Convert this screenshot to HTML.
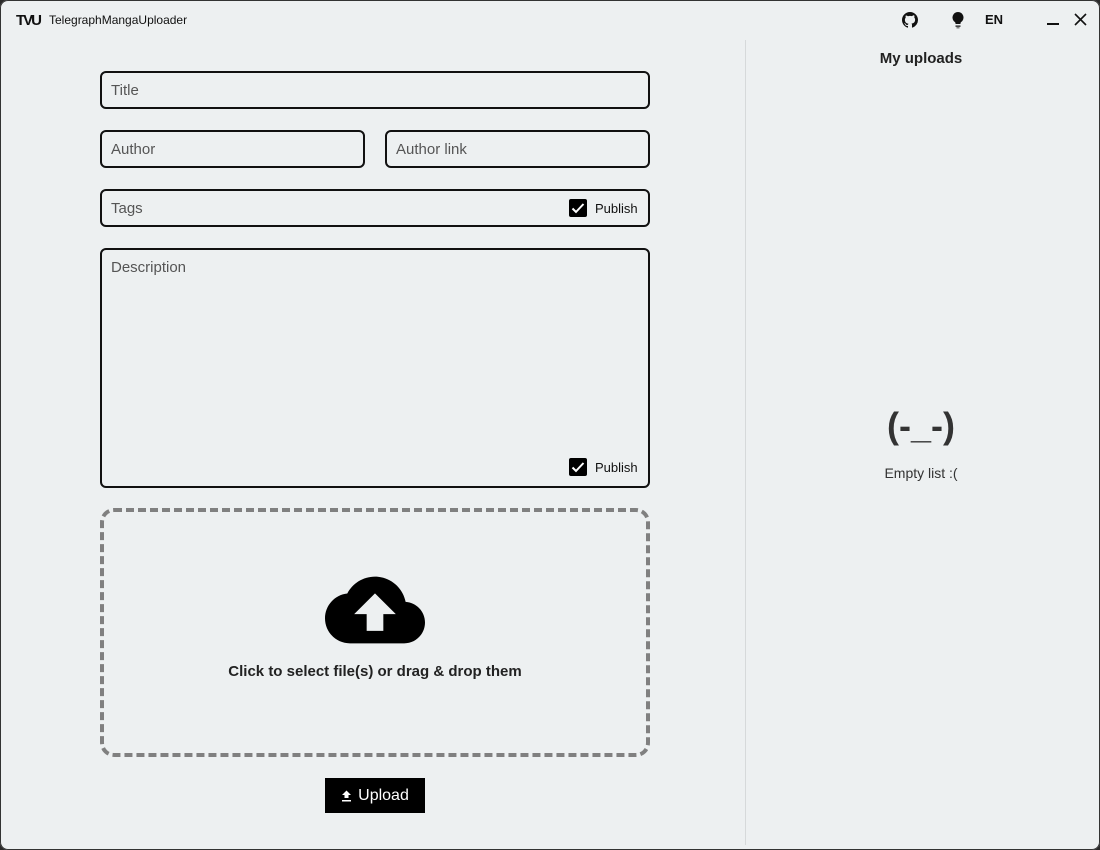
<!DOCTYPE html>
<html><head><meta charset="utf-8"><style>
*{box-sizing:border-box;margin:0;padding:0}
html,body{width:1100px;height:850px;overflow:hidden;background:#2a2a2a}
.win{position:absolute;left:0;top:0;width:1100px;height:850px;background:#edf0f1;box-shadow:inset 0 0 0 1px #333;border-radius:8px;font-family:"Liberation Sans",sans-serif;color:#222}
.t{position:absolute;left:49px;top:13px;font-size:12px;color:#111}
.inp{position:absolute;border:2px solid #111;border-radius:6px;font-size:15px;color:#555;padding:9px 9px}
.pub{position:absolute;font-size:13px;color:#111;display:flex;align-items:center;gap:8px}
.cb{width:18px;height:18px;background:#000;border-radius:2px;position:relative}
.cb svg{position:absolute;left:1px;top:1px}
.drop{position:absolute;left:100px;top:508px;width:550px;height:249px;border:4px dashed #808080;border-radius:14px}
</style></head><body><div class="win">
<div style="position:absolute;left:16px;top:12px;font-weight:bold;font-size:15px;letter-spacing:-2px;color:#111">TVU</div>
<div class="t">TelegraphMangaUploader</div>
<svg style="position:absolute;left:902px;top:12px" width="16" height="16" viewBox="0 0 16 16"><path fill="#111" d="M8 0C3.580 0 0 3.58 0 8c0 3.540 2.290 6.53 5.47 7.59.4.07.55-.17.55-.38v-1.33c-2.23.48-2.7-.95-2.7-.95-.36-.92-.89-1.17-.89-1.170-.73-.5.05-.49.05-.49.8.06 1.23.83 1.23.83.71 1.22 1.87.87 2.33.66.07-.52.28-.87.51-1.07-1.78-.2-3.640-.89-3.64-3.95 0-.87.31-1.59.82-2.15-.08-.2-.36-1.02.08-2.12 0 0 .67-.21 2.2.82A7.6 7.6 0 0 1 8 3.87c.68 0 1.36.09 2 .27 1.53-1.04 2.2-.82 2.2-.82.44 1.1.16 1.92.08 2.12.51.56.82 1.27.82 2.15 0 3.07-1.87 3.75-3.65 3.95.29.25.54.73.54 1.48v2.19c0 .21.15.46.55.38A8 8 0 0 0 16 8c0-4.42-3.58-8-8-8z"/></svg>
<svg style="position:absolute;left:950px;top:11px" width="16" height="18" viewBox="0 0 16 18"><path fill="#111" d="M8 1a5.5 5.5 0 0 0-3.2 10c.4.3.7.8.7 1.3V13h5v-.7c0-.5.3-1 .7-1.3A5.5 5.5 0 0 0 8 1zM5.5 14.5h5v1.2h-5zM6.5 16.5h3v.8h-3z"/></svg>
<div style="position:absolute;left:985px;top:12px;font-weight:bold;font-size:13px;color:#111">EN</div>
<div style="position:absolute;left:1047px;top:23px;width:12px;height:2px;background:#111"></div>
<svg style="position:absolute;left:1074px;top:13px" width="13" height="13" viewBox="0 0 13 13"><path d="M1 1l11 11M12 1L1 12" stroke="#111" stroke-width="1.6"/></svg>

<div class="inp" style="left:100px;top:71px;width:550px;height:38px">Title</div>
<div class="inp" style="left:100px;top:130px;width:265px;height:38px">Author</div>
<div class="inp" style="left:385px;top:130px;width:265px;height:38px">Author link</div>
<div class="inp" style="left:100px;top:189px;width:550px;height:38px">Tags</div>
<div class="pub" style="left:569px;top:199px"><div class="cb"><svg width="16" height="16" viewBox="0 0 16 16"><path d="M2.5 8.5l3.5 3.5 7.5-8" stroke="#fff" stroke-width="2" fill="none"/></svg></div>Publish</div>
<div class="inp" style="left:100px;top:248px;width:550px;height:240px">Description</div>
<div class="pub" style="left:569px;top:458px"><div class="cb"><svg width="16" height="16" viewBox="0 0 16 16"><path d="M2.5 8.5l3.5 3.5 7.5-8" stroke="#fff" stroke-width="2" fill="none"/></svg></div>Publish</div>
<div class="drop"></div>
<svg style="position:absolute;left:325px;top:560px" width="100" height="100" viewBox="0 0 24 24"><path fill="#000" d="M19.35 10.04C18.67 6.59 15.64 4 12 4 9.11 4 6.6 5.64 5.35 8.04 2.34 8.36 0 10.91 0 14c0 3.31 2.69 6 6 6h13c2.76 0 5-2.24 5-5 0-2.64-2.05-4.78-4.65-4.96zM14 13v4h-4v-4H7l5-5 5 5h-3z"/></svg>
<div style="position:absolute;left:100px;width:550px;top:663px;text-align:center;font-weight:bold;font-size:15px;color:#222">Click to select file(s) or drag &amp; drop them</div>
<div style="position:absolute;left:325px;top:778px;width:100px;height:35px;background:#000;color:#fff;font-size:16px;display:flex;align-items:center;justify-content:center;gap:6px"><svg width="11" height="12" viewBox="0 0 11 12"><path fill="#fff" d="M3.5 8V5H1l4.5-4.5L10 5H7.5v3zM1 10h9v1.5H1z"/></svg>Upload</div>

<div style="position:absolute;left:745px;top:40px;width:1px;height:805px;background:#d6d9da"></div>
<div style="position:absolute;left:745px;width:352px;top:50px;text-align:center;font-weight:bold;font-size:15px">My uploads</div>
<div style="position:absolute;left:745px;width:352px;top:405px;text-align:center;font-weight:bold;font-size:36px;color:#333">(-_-)</div>
<div style="position:absolute;left:745px;width:352px;top:465px;text-align:center;font-size:14px;color:#333">Empty list :(</div>
</div></body></html>
